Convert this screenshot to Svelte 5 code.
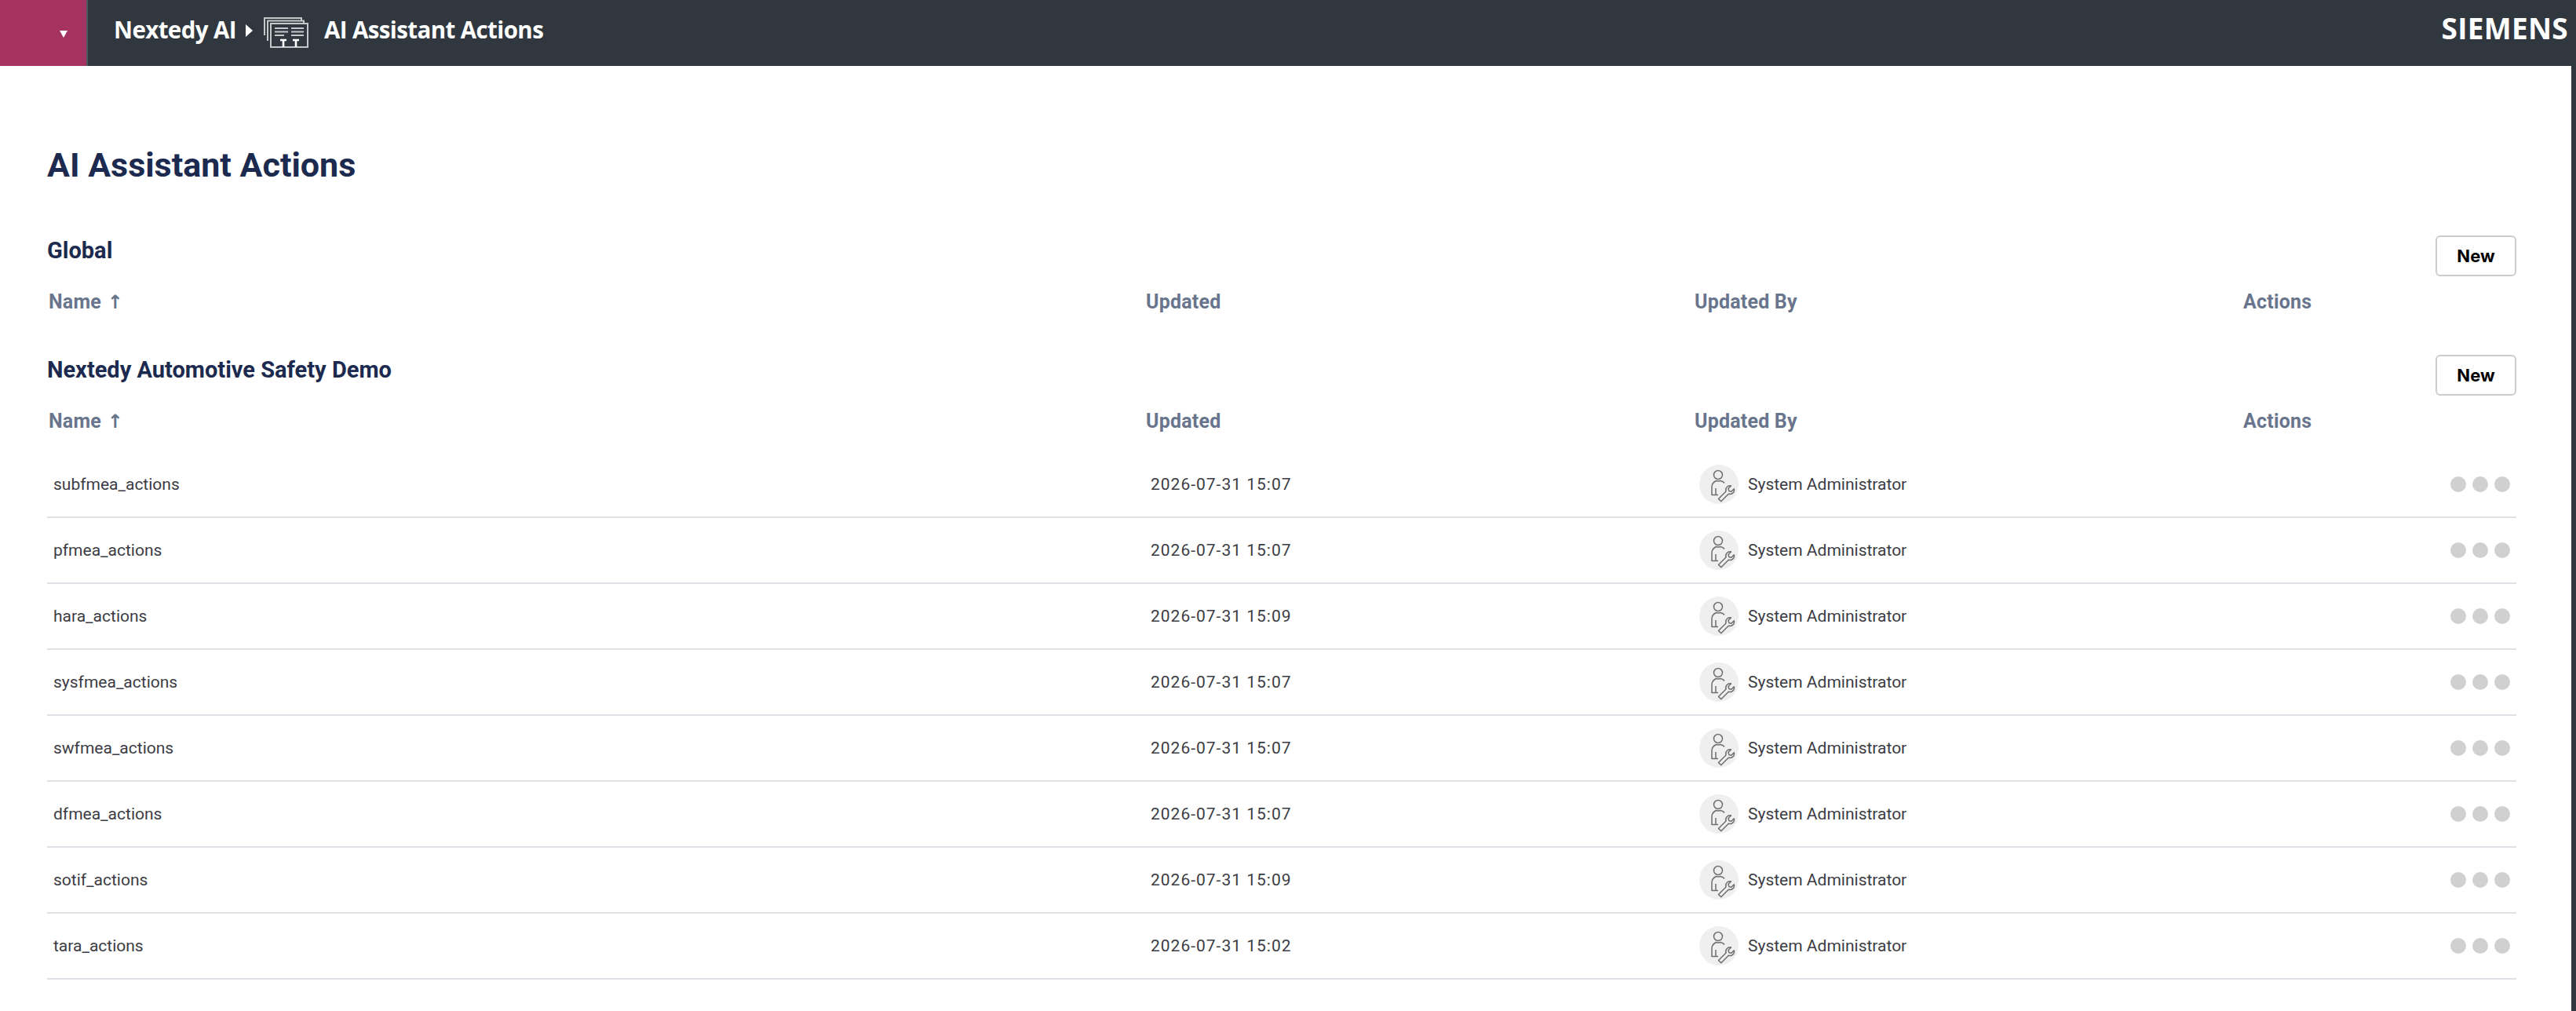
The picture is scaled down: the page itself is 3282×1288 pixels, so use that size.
<script>
  const sections = [
    { title: 'Global', rows: [] },
    {
      title: 'Nextedy Automotive Safety Demo',
      rows: [
        ['subfmea_actions', '2026-07-31 15:07'],
        ['pfmea_actions', '2026-07-31 15:07'],
        ['hara_actions', '2026-07-31 15:09'],
        ['sysfmea_actions', '2026-07-31 15:07'],
        ['swfmea_actions', '2026-07-31 15:07'],
        ['dfmea_actions', '2026-07-31 15:07'],
        ['sotif_actions', '2026-07-31 15:09'],
        ['tara_actions', '2026-07-31 15:02']
      ]
    }
  ];
</script>

<div class="page">
  <header class="topbar">
    <div class="nav-toggle"><span class="caret"></span></div>
    <nav class="crumbs">
      <span class="crumb">Nextedy AI</span>
      <span class="sep"></span>
      <svg class="crumb-icon" viewBox="0 0 58 40" width="58" height="40" fill="none" stroke="#c4c8cb" stroke-width="2">
        <path d="M1 23V1H48V4" />
        <path d="M5 30V4.500H51V8" />
        <path d="M9 8H56V38H9Z" />
        <path d="M14 14H31M14 18.500H31M14 23H26M35 14H51M35 18.500H51M35 23H51" stroke-width="2.200" />
        <path d="M21 29H29M25 29V38M37 29H45M41 29V38" stroke="#fff" stroke-width="2.600" />
      </svg>
      <span class="crumb">AI Assistant Actions</span>
    </nav>
    <span class="brand">SIEMENS</span>
  </header>

  <div class="body">
    <main class="content">
      <h1>AI Assistant Actions</h1>

      {#each sections as s}
        <section class="section">
          <div class="section-head">
            <h2>{s.title}</h2>
            <button class="new">New</button>
          </div>
          <div class="grid head">
            <div>Name <span class="arrow">↑</span></div>
            <div>Updated</div>
            <div>Updated By</div>
            <div>Actions</div>
          </div>
          {#each s.rows as r}
            <div class="grid row">
              <div class="cell">{r[0]}</div>
              <div class="cell date">{r[1]}</div>
              <div class="cell user">
                <span class="avatar">
                  <svg viewBox="0 0 50 50" width="50" height="50" fill="none" stroke="#6f6f6f" stroke-width="1.500" stroke-linejoin="round">
                    <circle cx="24" cy="13" r="5.500" />
                    <path d="M24 38.500H16V28C16 24.500 18.500 22 21.500 20.500C23 21 25.500 21 27 20.500C29 21 31 22 32 23.500M21 30V38.500" />
                    <path d="M24.500 43.500l9.500-9.500c-1.200-4 2-8 6.500-7l-3.500 3.500.8 3 3 .8 3.500-3.500c1 4.500-3 7.700-7 6.500l-9.500 9.500Z" />
                  </svg>
                </span>
                <span>System Administrator</span>
              </div>
              <div class="cell dots"><i></i><i></i><i></i></div>
            </div>
          {/each}
        </section>
      {/each}
    </main>
    <div class="rail"></div>
  </div>
</div>

<style>
  :global(body) {
    margin: 0;
    background: #fff;
    overflow: hidden;
  }
  .page {
    display: flex;
    flex-direction: column;
    height: 1288px;
    font-family: Roboto, "Liberation Sans", sans-serif;
  }
  .topbar {
    display: flex;
    align-items: center;
    flex: 0 0 84px;
    background: #30373f;
    color: #fff;
  }
  .nav-toggle {
    display: flex;
    align-items: center;
    justify-content: flex-end;
    box-sizing: border-box;
    width: 112px;
    height: 84px;
    padding-right: 24px;
    background: #a43361;
    border-right: 2px solid #4a5a5f;
  }
  .caret {
    width: 0;
    height: 0;
    border-left: 5px solid transparent;
    border-right: 5px solid transparent;
    border-top: 9px solid #fff;
    margin-top: 3px;
  }
  .crumbs {
    display: flex;
    align-items: center;
    margin-left: 33px;
    margin-top: -9px;
    flex: 1;
  }
  .crumb {
    font-family: "Open Sans", sans-serif;
    font-weight: 700;
    font-size: 29.500px;
    letter-spacing: -0.6px;
    white-space: nowrap;
  }
  .sep {
    width: 0;
    height: 0;
    margin: 2px 12px 0 12px;
    border-top: 8px solid transparent;
    border-bottom: 8px solid transparent;
    border-left: 9px solid #fff;
  }
  .crumb-icon {
    margin-right: 19px;
    margin-top: 9px;
    margin-left: 2px;
  }
  .brand {
    font-family: "Open Sans", sans-serif;
    font-weight: 700;
    font-size: 37px;
    letter-spacing: 0.3px;
    margin-right: 10px;
    margin-top: -13px;
  }
  .body {
    display: flex;
    flex: 1;
    min-height: 0;
  }
  .content {
    flex: 1;
    padding: 0 70px 0 60px;
    min-width: 0;
  }
  .rail {
    flex: 0 0 6px;
    background: #30373f;
  }
  h1 {
    margin: 100px 0 0;
    font-size: 43px;
    line-height: 52px;
    font-weight: 700;
    color: #1b2a4e;
  }
  h1 + .section {
    margin-top: 64px;
  }
  .section + .section {
    margin-top: 28px;
  }
  .section-head {
    display: flex;
    justify-content: space-between;
    align-items: flex-start;
  }
  h2 {
    margin: 0;
    font-size: 29px;
    line-height: 38px;
    font-weight: 700;
    color: #1b2a4e;
  }
  .new {
    box-sizing: border-box;
    width: 103px;
    height: 52px;
    padding: 0;
    background: #fff;
    border: 2px solid #ccc;
    border-radius: 6px;
    font: 700 22px Inter, sans-serif;
    color: #000;
  }
  .grid {
    display: grid;
    grid-template-columns: 1398px 699px 699px 1fr;
  }
  .head {
    height: 72px;
    box-sizing: border-box;
    padding-top: 14px;
    font-size: 25px;
    line-height: 38px;
    font-weight: 700;
    letter-spacing: 0.2px;
    color: #68758c;
  }
  .head > div {
    padding-left: 2px;
  }
  .arrow {
    font-family: "DejaVu Sans", sans-serif;
    font-size: 24px;
    margin-left: 1px;
  }
  .row {
    height: 84px;
    box-sizing: border-box;
    border-bottom: 2px solid #e0e0e6;
    align-items: center;
    font-size: 21px;
    color: #3c3c44;
  }
  .cell {
    padding-left: 8px;
    white-space: nowrap;
  }
  .date {
    letter-spacing: 1px;
  }
  .user {
    display: flex;
    align-items: center;
    gap: 12px;
  }
  .avatar {
    display: block;
    width: 50px;
    height: 50px;
    border-radius: 50%;
    background: #efefef;
  }
  .avatar svg {
    display: block;
  }
  .dots {
    display: flex;
    justify-content: flex-end;
    gap: 8px;
    padding-right: 8px;
  }
  .dots i {
    display: block;
    width: 20px;
    height: 20px;
    border-radius: 50%;
    background: #d0d0d0;
  }
</style>
